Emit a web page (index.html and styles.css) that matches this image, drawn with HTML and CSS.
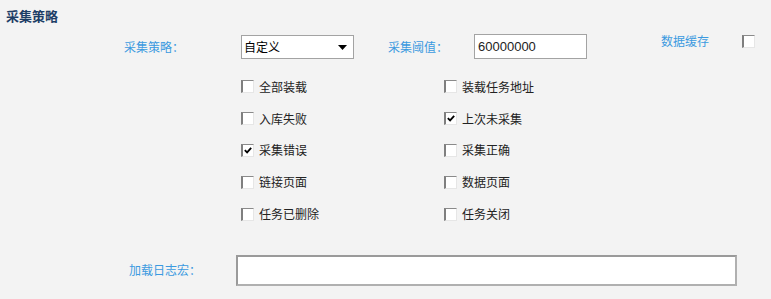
FILE: index.html
```html
<!DOCTYPE html>
<html lang="zh-CN">
<head>
    <meta charset="UTF-8">
    <title>采集策略</title>
    <link rel="stylesheet" href="styles.css">
</head>
<body>
    <div class="panel">
        <h3 class="title">采集策略</h3>

        <div class="top-row">
            <span class="label">采集策略：</span>
            <div class="select-box">
                <span class="select-text">自定义</span>
                <svg class="arrow" width="9" height="5" viewBox="0 0 9 5"><path d="M0 0 L9 0 L4.5 5 Z" fill="#000"/></svg>
            </div>
            <span class="label">采集阈值：</span>
            <div class="text-input">60000000</div>
            <span class="label label-high">数据缓存</span>
            <span class="cb cb-high"></span>
        </div>

        <div class="options">
            <label class="opt"><span class="cb"></span>全部装载</label>
            <label class="opt"><span class="cb"></span>装载任务地址</label>
            <label class="opt"><span class="cb"></span>入库失败</label>
            <label class="opt"><span class="cb checked"><svg width="11" height="11" viewBox="0 0 11 11"><path d="M2 5 L4.5 7.5 L9 2.5" stroke="#000" stroke-width="2" fill="none"/></svg></span>上次未采集</label>
            <label class="opt"><span class="cb checked"><svg width="11" height="11" viewBox="0 0 11 11"><path d="M2 5 L4.5 7.5 L9 2.5" stroke="#000" stroke-width="2" fill="none"/></svg></span>采集错误</label>
            <label class="opt"><span class="cb"></span>采集正确</label>
            <label class="opt"><span class="cb"></span>链接页面</label>
            <label class="opt"><span class="cb"></span>数据页面</label>
            <label class="opt"><span class="cb"></span>任务已删除</label>
            <label class="opt"><span class="cb"></span>任务关闭</label>
        </div>

        <div class="bottom-row">
            <span class="label">加载日志宏：</span>
            <div class="text-input wide"></div>
        </div>
    </div>
</body>
</html>
```

FILE: styles.css
```css
body {
    margin: 0;
    background-color: #f3f3f3;
    font-family: "Noto Sans CJK SC", "Liberation Sans", sans-serif;
    font-size: 12px;
    color: #222;
}

.panel {
    width: 771px;
    height: 299px;
}

.title {
    margin: 0;
    height: 30px;
    padding: 7px 0 0 6px;
    box-sizing: border-box;
    font-size: 13px;
    line-height: 18px;
    font-weight: bold;
    color: #1d3e66;
}

.label {
    color: #3b9ae0;
    font-size: 12px;
    line-height: 16px;
}

.top-row {
    display: grid;
    grid-template-columns: 117px 147px 86px 187px 81px auto;
    align-items: center;
    height: 25px;
    margin-top: 4px;
    padding-left: 124px;
}

.label-high {
    align-self: start;
    margin-top: -1px;
}

.select-box {
    position: relative;
    width: 113px;
    height: 24px;
    box-sizing: border-box;
    border: 1px solid #a3a3a3;
    background: #fff;
    padding-left: 2px;
    line-height: 22px;
    color: #000;
}

.arrow {
    position: absolute;
    right: 6px;
    top: 9px;
}

.text-input {
    width: 113px;
    height: 25px;
    box-sizing: border-box;
    border: 1px solid #a3a3a3;
    background: #fff;
    padding-left: 3px;
    font-family: "Liberation Sans", sans-serif;
    font-size: 13px;
    line-height: 23px;
    color: #222;
}

.text-input.wide {
    width: 501px;
    height: 31px;
    border-width: 2px;
    border-color: #9a9a9a #b0b0b0 #b0b0b0 #9a9a9a;
}

.cb {
    display: inline-flex;
    align-items: center;
    justify-content: center;
    width: 13px;
    height: 13px;
    box-sizing: border-box;
    background: #fff;
    border-top: 1px solid #8a8a8a;
    border-left: 2px solid #7f7f7f;
    border-right: 1px solid #e6e6e6;
    border-bottom: 1px solid #e6e6e6;
    flex-shrink: 0;
}

.cb-high {
    align-self: start;
    margin-top: 1px;
}

.options {
    display: grid;
    grid-template-columns: 203px 203px;
    grid-auto-rows: 31.8px;
    margin-top: 12px;
    padding-left: 241px;
}

.opt {
    display: flex;
    align-items: center;
    gap: 5px;
    line-height: 16px;
    color: #222;
}

.bottom-row {
    display: flex;
    align-items: center;
    margin-top: 25px;
    padding-left: 129px;
}

.bottom-row .label {
    width: 107px;
}
```
